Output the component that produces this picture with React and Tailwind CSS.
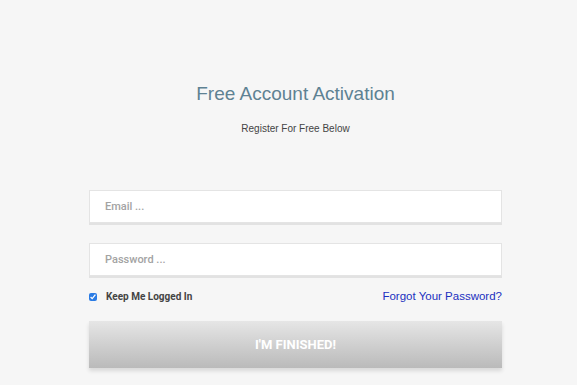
import React from "react";

const App = () => {
  return (
    <div className="w-[577px] h-[385px] overflow-hidden bg-[#f6f6f6]">
      <div className="ml-[89px] w-[413px]">
        <div className="flex flex-col items-center pt-[82px]">
          <h1 className="text-[19px] leading-[24px] text-[#5e8293] font-['Liberation_Sans',Arial,sans-serif]">
            Free Account Activation
          </h1>
          <p className="mt-[16px] text-[10px] leading-[14px] text-[#444] font-['Liberation_Sans',Arial,sans-serif]">
            Register For Free Below
          </p>
        </div>

        <form className="mt-[54px] flex flex-col font-['Roboto',sans-serif]">
          <input
            type="text"
            placeholder="Email ..."
            className="h-[33px] w-full border border-[#e4e4e4] bg-white px-[15px] text-[11px] font-medium text-[#555] placeholder:text-[#a3a3a3] shadow-[0_2px_0_#e2e2e2] outline-none"
          />
          <input
            type="password"
            placeholder="Password ..."
            className="mt-[20px] h-[33px] w-full border border-[#e4e4e4] bg-white px-[15px] text-[11px] font-medium text-[#555] placeholder:text-[#a3a3a3] shadow-[0_2px_0_#e2e2e2] outline-none"
          />

          <div className="mt-[12px] flex items-center justify-between">
            <label className="flex items-center gap-[9px]">
              <input type="checkbox" defaultChecked className="m-0 h-[8px] w-[8px] accent-[#2a7be4]" />
              <span className="text-[10px] font-bold text-[#444]">Keep Me Logged In</span>
            </label>
            <a href="#" className="text-[11.5px] text-[#1b30c0] font-['Liberation_Sans',Arial,sans-serif]">
              Forgot Your Password?
            </a>
          </div>

          <button
            type="button"
            className="mt-[16px] h-[47px] w-full bg-gradient-to-b from-[#e6e6e6] to-[#bababa] text-[13px] font-bold text-white shadow-[0_3px_4px_rgba(0,0,0,0.12)]"
          >
            I'M FINISHED!
          </button>
        </form>
      </div>
    </div>
  );
};

export default App;
